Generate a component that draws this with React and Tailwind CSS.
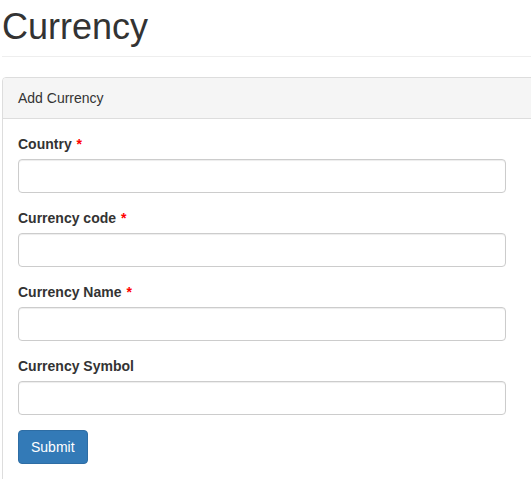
import React from 'react';

const fields = [
  { label: 'Country', required: true },
  { label: 'Currency code', required: true },
  { label: 'Currency Name', required: true },
  { label: 'Currency Symbol', required: false },
];

const App = () => {
  return (
    <div className="h-[479px] w-[531px] overflow-hidden bg-white text-[14px] leading-[20px] text-[#333] font-['Liberation_Sans',Arial,sans-serif]">
      <div className="ml-[2px] w-[560px]">
        {/* page header */}
        <div className="border-b border-[#eee] pt-[7px] pb-[9px]">
          <h1 className="text-[36px] leading-[39.6px] font-normal">Currency</h1>
        </div>

        {/* panel */}
        <div className="mt-[20px] border border-[#ddd] rounded-[4px]">
          <div className="bg-[#f5f5f5] border-b border-[#ddd] px-[15px] py-[10px] rounded-t-[3px]">
            Add Currency
          </div>
          <div className="px-[15px] pt-[15px] pb-[30px]">
            {fields.map((f) => (
              <div key={f.label} className="mb-[15px]">
                <label className="block mb-[5px] font-bold">
                  {f.label}
                  {f.required && <span className="ml-[1px] text-[#ff0000]"> *</span>}
                </label>
                <input
                  type="text"
                  className="block w-[488px] h-[34px] px-[12px] py-[6px] border border-[#ccc] rounded-[4px] bg-white shadow-[inset_0_1px_1px_rgba(0,0,0,0.075)] outline-none"
                />
              </div>
            ))}
            <button className="h-[34px] px-[12px] py-[6px] bg-[#337ab7] border border-[#2e6da4] rounded-[4px] text-white">
              Submit
            </button>
          </div>
        </div>
      </div>
    </div>
  );
};

export default App;
